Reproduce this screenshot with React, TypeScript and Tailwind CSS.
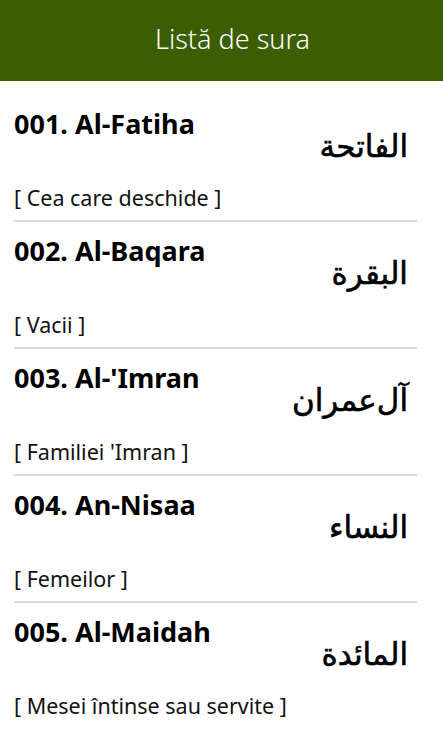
const suras = [
  { id: '001', name: 'Al-Fatiha', arabic: 'الفاتحة', meaning: 'Cea care deschide' },
  { id: '002', name: 'Al-Baqara', arabic: 'البقرة', meaning: 'Vacii' },
  { id: '003', name: "Al-'Imran", arabic: 'آل‌عمران', meaning: "Familiei 'Imran" },
  { id: '004', name: 'An-Nisaa', arabic: 'النساء', meaning: 'Femeilor' },
  { id: '005', name: 'Al-Maidah', arabic: 'المائدة', meaning: 'Mesei întinse sau servite' },
];

export default function App() {
  return (
    <div className="w-[443px] h-[738px] overflow-hidden bg-white font-['Noto_Sans',sans-serif] text-black">
      {/* Header */}
      <div className="h-[81px] bg-[#3a5e00] flex items-center justify-center pl-[22px]">
        <h1 className="text-[27px] leading-[36px] text-white font-light pb-[3px]">Listă de sura</h1>
      </div>

      {/* Sura list */}
      <div className="pt-[14px] pl-[14px] pr-[26px]">
        {suras.map((s, i) => (
          <div
            key={s.id}
            className={
              i < suras.length - 1 ? 'pt-[13px] border-b-2 border-[#d9d9d9]' : 'pt-[13px]'
            }
          >
            <div className="text-[27px] leading-[32px] font-bold">
              {s.id}. {s.name}
            </div>
            <div
              dir="rtl"
              className="mt-[-12px] pr-[9px] text-right text-[31px] leading-[36px] font-['DejaVu_Sans',sans-serif] [-webkit-text-stroke:0.6px_black]"
            >
              {s.arabic}
            </div>
            <div className="mt-[20px] mb-[8px] text-[21.5px] leading-[28px] text-[#111]">
              [ {s.meaning} ]
            </div>
          </div>
        ))}
      </div>
    </div>
  );
}
